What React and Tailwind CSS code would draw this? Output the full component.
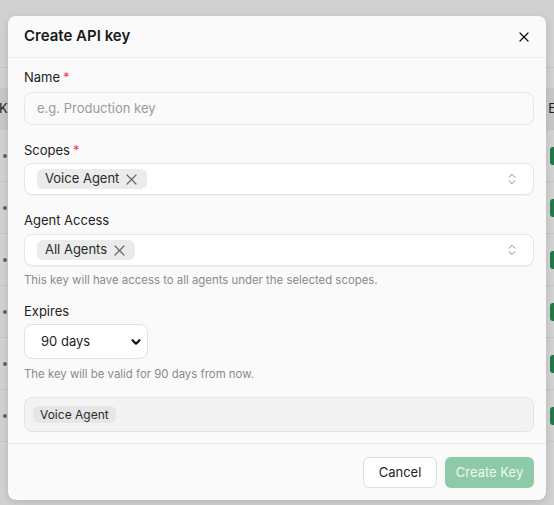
import { X, ChevronsUpDown } from 'lucide-react';

const rows = [0, 1, 2, 3, 4, 5];

function Chip({ label }) {
  return (
    <span className="inline-flex h-5 items-center gap-[7px] rounded-md bg-[#ebebeb] pl-2 pr-[10px] text-[13px] text-[#2a2a2a]">
      {label}
      <svg width="11" height="11" viewBox="0 0 11 11" fill="none">
        <path d="M1 1 10 10M10 1 1 10" stroke="#666" strokeWidth="1.2" strokeLinecap="round" />
      </svg>
    </span>
  );
}

function MultiSelect({ label }) {
  return (
    <div className="flex h-[32px] items-center justify-between rounded-lg border border-[#e6e6e6] bg-white pl-3 pr-[14px] shadow-[0_1px_1px_rgba(0,0,0,0.04)]">
      <Chip label={label} />
      <ChevronsUpDown className="h-[14px] w-[14px] text-[#777]" strokeWidth={1.5} />
    </div>
  );
}

function Label({ children, required, className = '' }) {
  return (
    <div className={`text-[13px] leading-[18px] text-[#222] ${className}`}>
      {children}
      {required && <span className="ml-[3px] text-[#e5484d]">*</span>}
    </div>
  );
}

export default function App() {
  return (
    <div
      className="relative h-[505px] w-[554px] overflow-hidden bg-[#cfd0cf]"
      style={{ fontFamily: 'Inter, "Noto Sans", sans-serif' }}
    >
      {/* Page behind the overlay */}
      <div className="h-[68px] border-b border-[#c4c4c4]" />
      <div className="h-[20px]" />
      <div className="flex h-[42px] items-center justify-between border-b border-[#c2c2c2] bg-[#c6c6c6] text-[13px] text-[#222]">
        <span className="-ml-[1px]">K</span>
        <span className="mr-[-2px]">E</span>
      </div>
      {rows.map((r) => (
        <div key={r} className="flex h-[52px] items-center justify-between border-b border-[#c2c2c2]">
          <span className="ml-[3px] h-[4px] w-[4px] rounded-full bg-[#5b6470]" />
          <span className="mr-[-8px] h-[18px] w-[12px] rounded-[3px] bg-[#1f7a45]" />
        </div>
      ))}

      {/* Modal */}
      <div className="absolute left-[8px] top-[16px] flex w-[538px] flex-col rounded-lg bg-[#fafafa] shadow-[0_2px_6px_rgba(0,0,0,0.12)]">
        <div className="flex h-[42px] items-center justify-between border-b border-[#ebebeb] pl-4 pr-[14px]">
          <h2 className="text-[15px] font-semibold text-[#1a1a1a]">Create API key</h2>
          <X className="h-[16px] w-[16px] text-[#111]" strokeWidth={1.8} />
        </div>

        <div className="flex flex-col border-b border-[#ebebeb] pb-[11px] pl-4 pr-3 pt-[10px]">
          <Label required className="mb-[6px]">Name</Label>
          <div className="flex h-[33px] items-center rounded-lg border border-[#e6e6e6] bg-[#fafafa] px-3 text-[13px] text-[#9a9a9a]">
            e.g. Production key
          </div>

          <Label required className="mb-[4px] mt-4">Scopes</Label>
          <MultiSelect label="Voice Agent" />

          <Label className="mb-[5px] mt-4">Agent Access</Label>
          <MultiSelect label="All Agents" />
          <p className="mt-[6px] text-[11.4px] leading-[16px] text-[#8a8a8a]">
            This key will have access to all agents under the selected scopes.
          </p>

          <Label className="mb-[4px] mt-[14px]">Expires</Label>
          <div className="flex h-[35px] w-[124px] items-center justify-between rounded-lg border border-[#e2e2e2] bg-white pl-4 pr-[5px] text-[13px] text-[#222]">
            90 days
            <svg width="12" height="12" viewBox="0 0 12 12" fill="none">
              <path d="M2.5 4.2 6 7.7 9.5 4.2" stroke="#111" strokeWidth="2.2" strokeLinecap="round" strokeLinejoin="round" />
            </svg>
          </div>
          <p className="mt-[7px] text-[11.4px] leading-[16px] text-[#8a8a8a]">
            The key will be valid for 90 days from now.
          </p>

          <div className="mt-[15px] flex h-[35px] items-center rounded-lg border border-[#e4e4e4] bg-[#f3f3f3] px-2">
            <span className="rounded-md bg-[#e6e6e6] px-[7px] text-[12px] leading-[17px] text-[#2a2a2a]">Voice Agent</span>
          </div>
        </div>

        <div className="flex justify-end gap-2 px-3 pb-3 pt-[13px]">
          <button className="h-[31px] w-[74px] rounded-md border border-[#dedede] bg-white text-[13px] text-[#222]">
            Cancel
          </button>
          <button className="h-[31px] w-[89px] rounded-md bg-[#8fcaa8] text-[13px] text-[#eef8f1]">
            Create Key
          </button>
        </div>
      </div>
    </div>
  );
}
